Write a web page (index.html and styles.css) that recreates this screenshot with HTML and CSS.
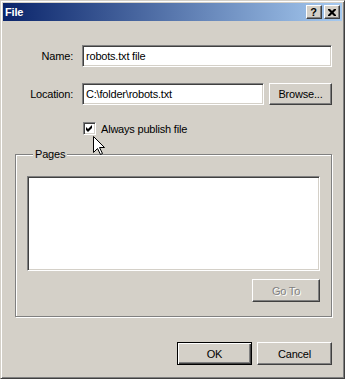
FILE: index.html
```html
<!DOCTYPE html>
<html lang="en">
<head>
    <meta charset="UTF-8">
    <title>File</title>
    <link rel="stylesheet" href="styles.css">
</head>
<body>

    <div class="window">
        <div class="titlebar">
            <span class="title">File</span>
            <div class="title-buttons">
                <button class="cap-btn help">?</button>
                <button class="cap-btn close">
                    <svg width="8" height="7" viewBox="0 0 8 7">
                        <path d="M0 0h2l2 2 2-2h2v1l-2.5 2.5L8 6v1H6L4 5 2 7H0V6l2.5-2.5L0 1z" fill="#000"/>
                    </svg>
                </button>
            </div>
        </div>

        <div class="content">
            <div class="row name-row">
                <label class="field-label">Name:</label>
                <div class="edit grow">robots.txt file</div>
            </div>
            <div class="row location-row">
                <label class="field-label">Location:</label>
                <div class="edit grow">C:\folder\robots.txt</div>
                <button class="btn browse">Browse...</button>
            </div>
            <div class="check-row">
                <span class="checkbox">
                    <svg width="9" height="9" viewBox="0 0 9 9">
                        <path d="M1 3 L3 5 L7 1 L7 4 L3 8 L1 6 Z" fill="#000"/>
                    </svg>
                </span>
                <span>Always publish file</span>
            </div>

            <fieldset class="group">
                <legend>Pages</legend>
                <div class="listbox"></div>
                <div class="group-actions">
                    <button class="btn goto" disabled>Go To</button>
                </div>
            </fieldset>

            <div class="footer">
                <button class="btn default">OK</button>
                <button class="btn">Cancel</button>
            </div>
        </div>

        <svg class="pointer" width="13" height="20" viewBox="0 0 13 20">
            <path d="M0.5 0.5 L0.5 16.5 L4.5 12.5 L7.5 18.5 L9.5 17.5 L6.5 11.5 L11.5 11.5 Z" fill="#fff" stroke="#000" stroke-width="1"/>
        </svg>
    </div>

</body>
</html>
```

FILE: styles.css
```css
body {
    margin: 0;
    font-family: "Liberation Sans", Arial, sans-serif;
    font-size: 11px;
    letter-spacing: -0.2px;
    color: #000;
}
.window {
    position: relative;
    box-sizing: border-box;
    width: 345px;
    height: 379px;
    padding: 2px;
    background: #d4d0c8;
    border: 1px solid;
    border-color: #d4d0c8 #404040 #404040 #d4d0c8;
    box-shadow: inset 1px 1px 0 #fff, inset -1px -1px 0 #808080;
    display: flex;
    flex-direction: column;
}
.titlebar {
    height: 18px;
    display: flex;
    align-items: center;
    justify-content: space-between;
    padding: 0 2px 0 2px;
    background: linear-gradient(to right, #0a246a, #a6caf0);
}
.title {
    color: #fff;
    font-weight: bold;
    font-size: 11px;
}
.title-buttons {
    display: flex;
    gap: 2px;
}
.cap-btn {
    box-sizing: border-box;
    width: 16px;
    height: 14px;
    padding: 0;
    background: #d4d0c8;
    border: 1px solid;
    border-color: #fff #404040 #404040 #fff;
    box-shadow: inset -1px -1px 0 #808080;
    display: flex;
    align-items: center;
    justify-content: center;
    font-family: "Liberation Sans", Arial, sans-serif;
    font-weight: bold;
    font-size: 11px;
    line-height: 1;
}
.help {
    padding-right: 1px;
}
.content {
    flex: 1;
    display: flex;
    flex-direction: column;
    padding: 0 10px 11px 12px;
}
.row {
    display: flex;
    align-items: center;
}
.name-row {
    margin-top: 24px;
}
.location-row {
    margin-top: 16px;
}
.field-label {
    width: 58px;
    margin-right: 9px;
    text-align: right;
}
.edit {
    box-sizing: border-box;
    height: 22px;
    padding: 0 3px;
    display: flex;
    align-items: center;
    background: #fff;
    border: 1px solid;
    border-color: #808080 #fff #fff #808080;
    box-shadow: inset 1px 1px 0 #404040, inset -1px -1px 0 #d4d0c8;
    white-space: nowrap;
}
.grow {
    flex: 1;
}
.btn {
    box-sizing: border-box;
    height: 23px;
    width: 75px;
    padding: 0;
    font-family: "Liberation Sans", Arial, sans-serif;
    font-size: 11px;
    letter-spacing: -0.2px;
    color: #000;
    background: #d4d0c8;
    border: 1px solid;
    border-color: #fff #404040 #404040 #fff;
    box-shadow: inset -1px -1px 0 #808080;
}
.btn.default {
    border-color: #000;
    box-shadow: inset 1px 1px 0 #fff, inset -1px -1px 0 #404040, inset -2px -2px 0 #808080;
}
.browse {
    width: 63px;
    height: 22px;
    margin-left: 5px;
}
.check-row {
    display: flex;
    align-items: center;
    gap: 5px;
    margin-top: 17px;
    padding-left: 68px;
    height: 13px;
}
.checkbox {
    box-sizing: border-box;
    width: 13px;
    height: 13px;
    background: #fff;
    border: 1px solid;
    border-color: #808080 #fff #fff #808080;
    box-shadow: inset 1px 1px 0 #404040, inset -1px -1px 0 #d4d0c8;
    display: flex;
    align-items: center;
    justify-content: center;
}
.group {
    margin: 13px 0 0 0;
    padding: 15px 11px 14px 11px;
    border: 1px solid #808080;
    box-shadow: 1px 1px 0 #fff, inset 1px 1px 0 #fff;
    min-width: 0;
}
.group legend {
    margin-left: 6px;
    padding: 0 2px;
    line-height: 13px;
    background: #d4d0c8;
}
.listbox {
    box-sizing: border-box;
    height: 95px;
    background: #fff;
    border: 1px solid;
    border-color: #808080 #fff #fff #808080;
    box-shadow: inset 1px 1px 0 #404040, inset -1px -1px 0 #d4d0c8;
}
.group-actions {
    display: flex;
    justify-content: flex-end;
    margin-top: 8px;
}
.goto {
    width: 68px;
}
.goto:disabled {
    color: #808080;
    text-shadow: 1px 1px 0 #fff;
}
.footer {
    margin-top: auto;
    display: flex;
    justify-content: flex-end;
    gap: 5px;
}
.pointer {
    position: absolute;
    left: 92px;
    top: 135px;
}
```
